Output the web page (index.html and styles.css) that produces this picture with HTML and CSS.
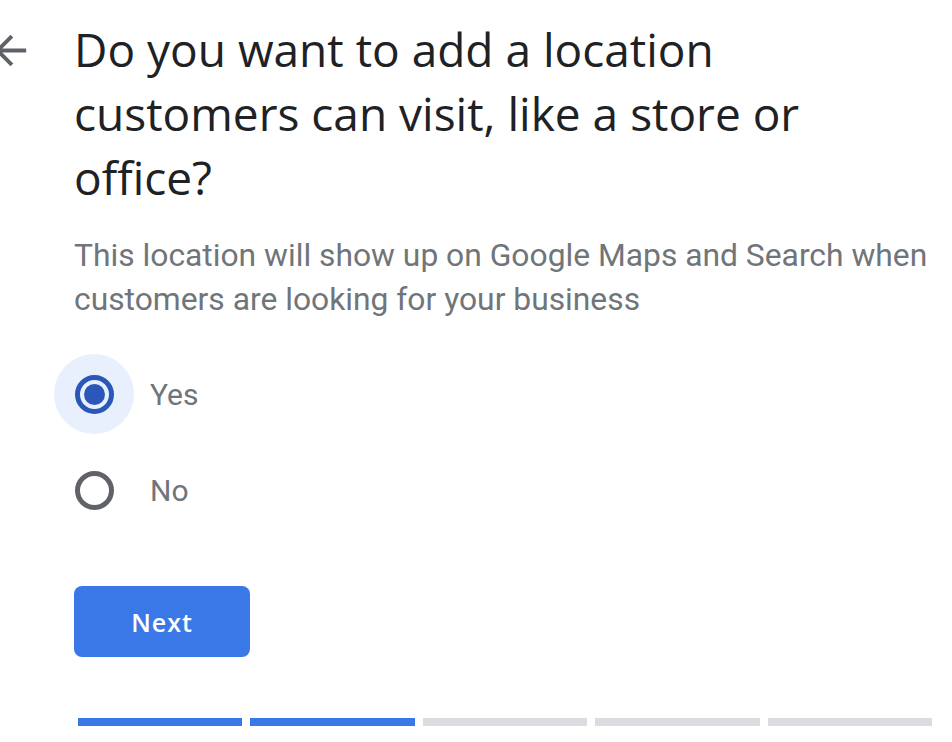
FILE: index.html
```html
<!DOCTYPE html>
<html lang="en">
<head>
    <meta charset="UTF-8">
    <meta name="viewport" content="width=device-width, initial-scale=1.0">
    <title>Add a location</title>
    <link rel="stylesheet" href="styles.css">
</head>
<body>
    <div class="page">
        <div class="header">
            <button class="back" aria-label="Back">
                <svg viewBox="0 0 24 24" width="47" height="47">
                    <path d="M20 11H7.83l5.59-5.59L12 4l-8 8 8 8 1.41-1.41L7.83 13H20v-2z"/>
                </svg>
            </button>
            <h1>Do you want to add a location customers can visit, like a store or office?</h1>
        </div>

        <p class="subtitle">This location will show up on Google Maps and Search when customers are looking for your business</p>

        <div class="options">
            <label class="option">
                <input type="radio" name="location" value="yes" checked>
                <span class="radio"></span>
                <span class="option-label">Yes</span>
            </label>
            <label class="option">
                <input type="radio" name="location" value="no">
                <span class="radio"></span>
                <span class="option-label">No</span>
            </label>
        </div>

        <button class="next">Next</button>

        <div class="progress">
            <span class="step done"></span>
            <span class="step done"></span>
            <span class="step"></span>
            <span class="step"></span>
            <span class="step"></span>
        </div>
    </div>
</body>
</html>
```

FILE: styles.css
```css
:root {
    --text-color: #202124;
    --text-secondary: #70757a;
    --icon-color: #5f6368;
    --primary-color: #3b78e7;
    --radio-color: #2b57b8;
    --halo-color: #e8f0fe;
    --track-color: #dadce0;
}

html, body {
    margin: 0;
    background: #ffffff;
    overflow: hidden;
}

.page {
    width: 878px;
    padding: 0 0 0 74px;
}

.header {
    display: flex;
    align-items: flex-start;
    gap: 40px;
    margin-left: -87px;
}

.back {
    flex: none;
    display: flex;
    padding: 0;
    margin-top: 27px;
    border: none;
    background: none;
    fill: var(--icon-color);
}

h1 {
    margin: 17px 0 0;
    font-family: "Open Sans", sans-serif;
    font-weight: 400;
    font-size: 46px;
    line-height: 64px;
    color: var(--text-color);
    width: 760px;
}

.subtitle {
    margin: 24px 0 0;
    font-family: Roboto, sans-serif;
    font-size: 31.8px;
    line-height: 44px;
    color: var(--text-secondary);
}

.options {
    display: flex;
    flex-direction: column;
    gap: 16px;
    margin-top: 33px;
    margin-left: -20px;
}

.option {
    display: flex;
    align-items: center;
    gap: 16px;
    cursor: pointer;
}

.option input {
    display: none;
}

.radio {
    width: 80px;
    height: 80px;
    border-radius: 50%;
    display: flex;
    align-items: center;
    justify-content: center;
    position: relative;
}

.radio::before {
    content: '';
    width: 29px;
    height: 29px;
    border: 5px solid var(--icon-color);
    border-radius: 50%;
}

.radio::after {
    content: '';
    position: absolute;
    width: 21px;
    height: 21px;
    border-radius: 50%;
    background: var(--radio-color);
    display: none;
}

.option input:checked + .radio {
    background: var(--halo-color);
}

.option input:checked + .radio::before {
    border-color: var(--radio-color);
}

.option input:checked + .radio::after {
    display: block;
}

.option-label {
    font-family: Roboto, sans-serif;
    font-size: 30px;
    color: var(--text-secondary);
}

.next {
    display: block;
    margin-top: 56px;
    width: 176px;
    height: 71px;
    border: none;
    border-radius: 8px;
    background: var(--primary-color);
    color: #ffffff;
    font-family: "Open Sans", sans-serif;
    font-weight: 600;
    font-size: 25px;
    letter-spacing: 1px;
    cursor: pointer;
}

.progress {
    display: flex;
    gap: 8px;
    margin-top: 61px;
    margin-left: 4px;
    width: 854px;
}

.step {
    flex: 1;
    height: 8px;
    background: var(--track-color);
}

.step.done {
    background: var(--primary-color);
}
```
